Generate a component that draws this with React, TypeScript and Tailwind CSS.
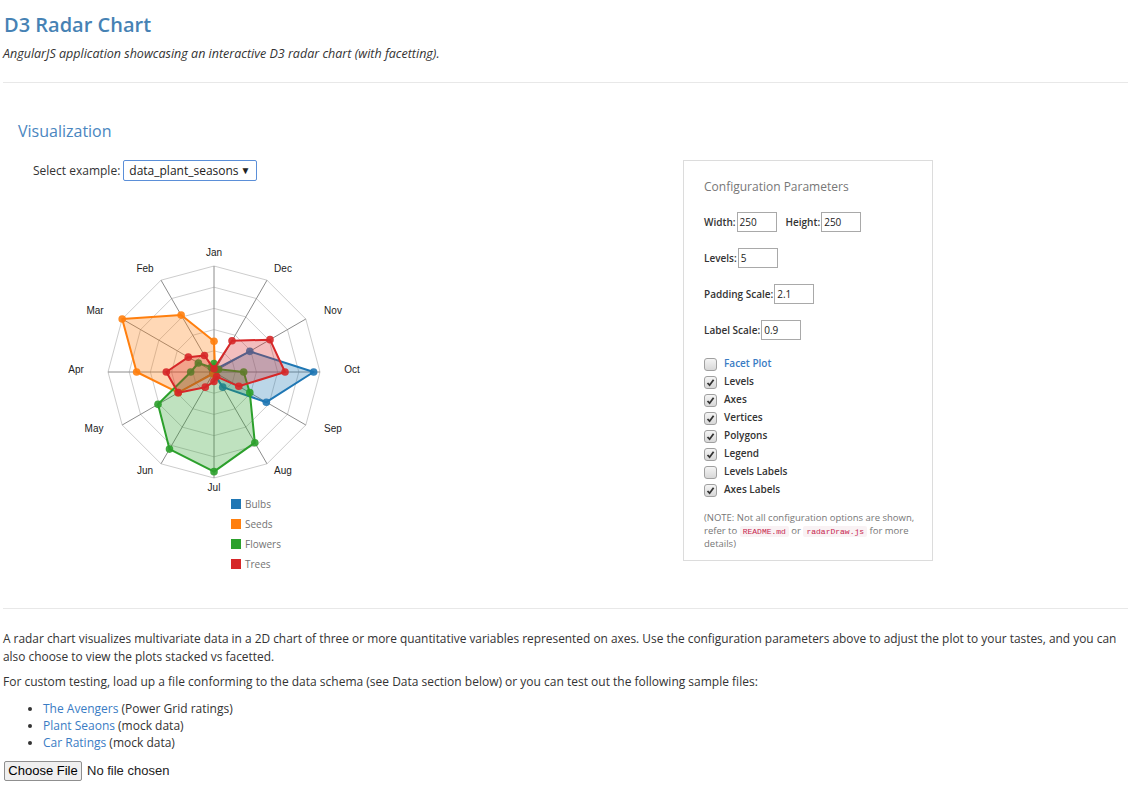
import React from "react"

const MONTHS = ["Jan", "Feb", "Mar", "Apr", "May", "Jun", "Jul", "Aug", "Sep", "Oct", "Nov", "Dec"]

// label centres, relative to the chart centre
const LABELS: [number, number][] = [
  [0, -120],
  [-69, -104],
  [-119, -62],
  [-138, -3],
  [-120, 56],
  [-69, 98],
  [0, 115],
  [69, 98],
  [119, 56],
  [138, -3],
  [119, -62],
  [69, -104],
]

const SERIES = [
  { name: "Bulbs", color: "#1f77b4", values: [0.02, 0.01, 0.01, 0.01, 0.01, 0.01, 0.02, 0.165, 0.57, 0.94, 0.39, 0.03] },
  { name: "Seeds", color: "#ff7f0e", values: [0.29, 0.62, 1.0, 0.73, 0.39, 0.02, 0.02, 0.01, 0.01, 0.01, 0.01, 0.02] },
  { name: "Flowers", color: "#2ca02c", values: [0.08, 0.05, 0.17, 0.22, 0.61, 0.84, 0.94, 0.77, 0.39, 0.28, 0.05, 0.03] },
  { name: "Trees", color: "#d62728", values: [0.03, 0.18, 0.28, 0.45, 0.39, 0.165, 0.09, 0.05, 0.27, 0.67, 0.61, 0.34] },
]

const CX = 181
const CY = 177
const R = 106

function pt(i: number, v: number): [number, number] {
  const a = (i * Math.PI * 2) / 12
  return [CX - R * v * Math.sin(a), CY - R * v * Math.cos(a)]
}

function RadarChart() {
  const levels = [1, 2, 3, 4, 5]
  return (
    <svg width="340" height="380" className="block">
      {levels.map((l) => (
        <polygon
          key={l}
          points={MONTHS.map((_, i) => pt(i, l / 5).join(",")).join(" ")}
          fill="none"
          stroke="#cdcdcd"
          strokeWidth="1"
        />
      ))}
      {MONTHS.map((_, i) => {
        const [x, y] = pt(i, 1)
        return <line key={i} x1={CX} y1={CY} x2={x} y2={y} stroke="#8c8c8c" strokeWidth="1" />
      })}
      {MONTHS.map((m, i) => (
        <text
          key={m}
          x={CX + LABELS[i][0]}
          y={CY + LABELS[i][1]}
          textAnchor="middle"
          dominantBaseline="central"
          fontSize="10"
          fill="#222"
          fontFamily="'Liberation Sans', Arial, sans-serif"
        >
          {m}
        </text>
      ))}
      {SERIES.map((s) => (
        <g key={s.name}>
          <polygon
            points={s.values.map((v, i) => pt(i, v).join(",")).join(" ")}
            fill={s.color}
            fillOpacity="0.3"
            stroke={s.color}
            strokeWidth="2"
            strokeLinejoin="round"
          />
          {s.values.map((v, i) => {
            const [x, y] = pt(i, v)
            return <circle key={i} cx={x} cy={y} r="3.8" fill={s.color} fillOpacity="0.9" />
          })}
        </g>
      ))}
      {SERIES.map((s, i) => (
        <g key={s.name}>
          <rect x="198" y={304 + i * 20} width="10" height="10" fill={s.color} />
          <text
            x="212"
            y={309 + i * 20}
            dominantBaseline="central"
            fontSize="10"
            fill="#737373"
            fontFamily="'Open Sans', sans-serif"
          >
            {s.name}
          </text>
        </g>
      ))}
    </svg>
  )
}

function Checkbox({ checked }: { checked: boolean }) {
  return (
    <div className="mt-[4px] w-[13px] h-[13px] rounded-[3px] border border-[#a0a0a0] bg-gradient-to-b from-[#f4f4f4] to-[#d8d8d8] flex items-center justify-center shrink-0">
      {checked && (
        <svg width="9" height="9" viewBox="0 0 9 9">
          <path d="M1.5 5 L3.6 7.2 L7.6 1.8" fill="none" stroke="#333" strokeWidth="1.8" />
        </svg>
      )}
    </div>
  )
}

function NumInput({ value }: { value: string }) {
  return (
    <div className="w-[40px] h-[20px] border border-[#a9a9a9] bg-white px-[2px] text-[10px] font-normal leading-[18px] text-[#222]">
      {value}
    </div>
  )
}

function Code({ children }: { children: string }) {
  return (
    <code className="inline-block px-[3px] rounded-[2px] bg-[#f9f2f4] text-[#c7254e] text-[8px] leading-[11px] font-['Liberation_Mono',monospace]">
      {children}
    </code>
  )
}

export default function App() {
  const options: [string, boolean][] = [
    ["Levels", true],
    ["Axes", true],
    ["Vertices", true],
    ["Polygons", true],
    ["Legend", true],
    ["Levels Labels", false],
    ["Axes Labels", true],
  ]

  return (
    <div className="min-h-screen bg-white pl-[3px] text-[#333] font-['Open_Sans',sans-serif]">
      <h1 className="pt-[12px] pl-[1px] text-[20px] leading-[26px] font-semibold text-[#4682b4]">D3 Radar Chart</h1>
      <p className="mt-[7px] text-[12.5px] leading-[18px] italic text-[#333]">
        AngularJS application showcasing an interactive D3 radar chart (with facetting).
      </p>
      <hr className="mt-[19px] border-0 border-t border-[#e8e8e8]" />

      <section className="pl-[15px]">
        <h2 className="mt-[37px] text-[16px] leading-[22px] text-[#4a86c0]">Visualization</h2>

        <div className="mt-[18px] flex">
          <div className="w-[665px] pl-[15px]">
            <div className="flex items-center h-[21px]">
              <span className="text-[12px]">Select example:</span>
              <div className="ml-[3px] w-[134px] h-[21px] border border-[#5b8fd8] rounded-[2px] flex items-center justify-between pl-[5px] pr-[6px] text-[12px] text-[#222]">
                <span>data_plant_seasons</span>
                <span className="text-[10px]">▼</span>
              </div>
            </div>
            <div className="mt-[14px]">
              <RadarChart />
            </div>
          </div>

          <div className="w-[250px] h-[401px] border border-[#dcdcdc] pl-[20px] pr-[14px] pt-[17px]">
            <div className="text-[12px] leading-[18px] text-[#777]">Configuration Parameters</div>

            <div className="mt-[16px] flex items-center text-[10px] font-semibold">
              <span className="mr-[1px]">Width:</span>
              <NumInput value="250" />
              <span className="ml-[9px] mr-[1px]">Height:</span>
              <NumInput value="250" />
            </div>
            <div className="mt-[16px] flex items-center text-[10px] font-semibold">
              <span className="mr-[1px]">Levels:</span>
              <NumInput value="5" />
            </div>
            <div className="mt-[16px] flex items-center text-[10px] font-semibold">
              <span className="mr-[1px]">Padding Scale:</span>
              <NumInput value="2.1" />
            </div>
            <div className="mt-[16px] flex items-center text-[10px] font-semibold">
              <span className="mr-[1px]">Label Scale:</span>
              <NumInput value="0.9" />
            </div>

            <div className="mt-[14px]">
              <div className="flex h-[18px] items-start">
                <Checkbox checked={false} />
                <span className="ml-[7px] text-[10px] leading-[18px] font-semibold text-[#3a7cc4]">Facet Plot</span>
              </div>
              {options.map(([label, on]) => (
                <div key={label} className="flex h-[18px] items-start">
                  <Checkbox checked={on} />
                  <span className="ml-[7px] text-[10px] leading-[18px] font-semibold">{label}</span>
                </div>
              ))}
            </div>

            <p className="mt-[13px] text-[9.5px] leading-[13px] text-[#777]">
              (NOTE: Not all configuration options are shown, refer to <Code>README.md</Code> or{" "}
              <Code>radarDraw.js</Code> for more details)
            </p>
          </div>
        </div>
      </section>

      <hr className="mt-[33px] border-0 border-t border-[#e8e8e8]" />

      <p className="mt-[20px] text-[11.9px] leading-[18px]">
        A radar chart visualizes multivariate data in a 2D chart of three or more quantitative variables represented on
        axes. Use the configuration parameters above to adjust the plot to your tastes, and you can also choose to view
        the plots stacked vs facetted.
      </p>
      <p className="mt-[8px] text-[12px] leading-[18px]">
        For custom testing, load up a file conforming to the data schema (see Data section below) or you can test out the
        following sample files:
      </p>
      <ul className="mt-[9px] pl-[40px] list-disc text-[12px] leading-[17px]">
        <li>
          <span className="text-[#3a7cc4]">The Avengers</span> (Power Grid ratings)
        </li>
        <li>
          <span className="text-[#3a7cc4]">Plant Seaons</span> (mock data)
        </li>
        <li>
          <span className="text-[#3a7cc4]">Car Ratings</span> (mock data)
        </li>
      </ul>
      <div className="mt-[10px] flex items-center font-['Liberation_Sans',Arial,sans-serif] text-[13px]">
        <button className="ml-[1px] h-[20px] w-[78px] border border-[#8f8f8f] rounded-[2px] bg-[#efefef] text-black leading-[18px]">
          Choose File
        </button>
        <span className="ml-[5px] text-[#222]">No file chosen</span>
      </div>
    </div>
  )
}
